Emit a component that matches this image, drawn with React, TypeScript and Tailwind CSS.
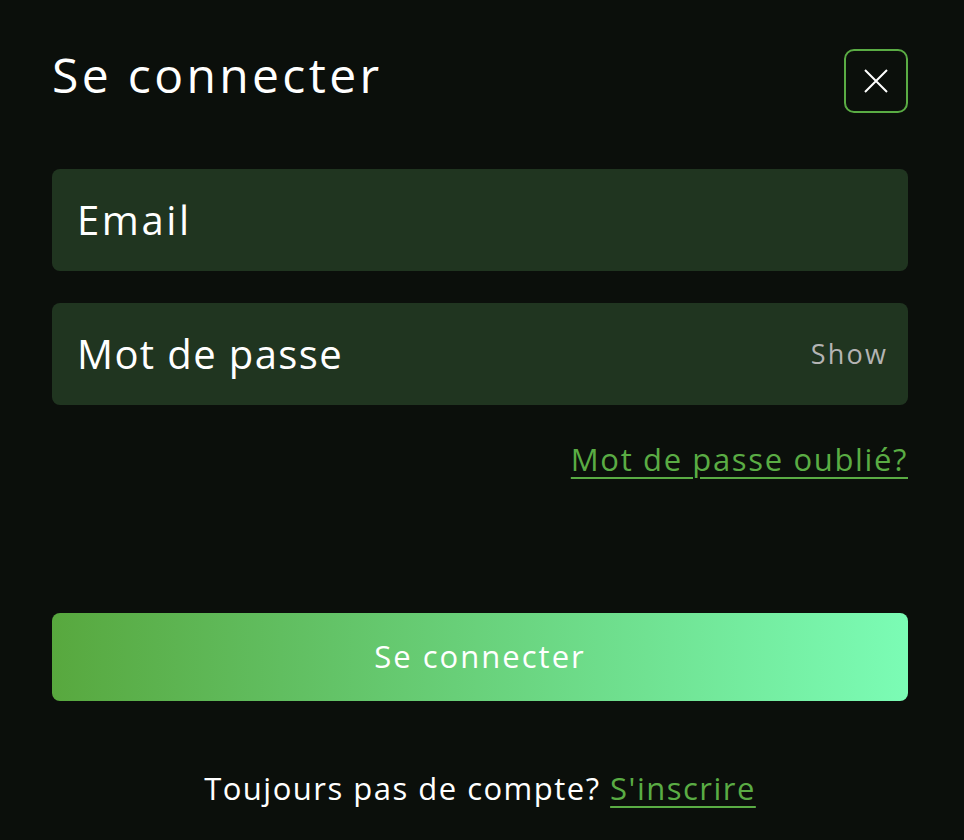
import React from "react";

export default function App() {
  return (
    <div
      className="w-[964px] h-[840px] bg-[#0b0f0b] text-white flex flex-col pl-[52px] pr-[56px] tracking-[0.06em]"
      style={{ fontFamily: '"Open Sans", "Noto Sans", sans-serif' }}
    >
      <div className="flex items-start justify-between pt-[49px]">
        <h1 className="text-[48px] leading-[58px] mt-[-3px] font-normal tracking-[0.07em]">Se connecter</h1>
        <button className="w-[64px] h-[64px] rounded-[10px] border-2 border-[#5aac44] flex items-center justify-center">
          <svg width="26" height="26" viewBox="0 0 26 26" fill="none" stroke="white" strokeWidth="2">
            <path d="M2 2 L24 24 M24 2 L2 24" />
          </svg>
        </button>
      </div>
      <div className="mt-[56px] h-[102px] rounded-[8px] bg-[#203520] flex items-center px-[25px]">
        <span className="text-[40px] tracking-[0.065em]">Email</span>
      </div>
      <div className="mt-[32px] h-[102px] rounded-[8px] bg-[#203520] flex items-center justify-between pl-[25px] pr-[20px]">
        <span className="text-[40px] tracking-[0.035em]">Mot de passe</span>
        <span className="text-[27px] text-[#b4b4b4] tracking-[0.08em]">Show</span>
      </div>
      <div className="flex justify-end mt-[31px]">
        <a className="text-[31px] tracking-[0.053em] text-[#5aac44] underline underline-offset-[6px] decoration-[2px]">Mot de passe oublié?</a>
      </div>
      <button className="mt-[130px] h-[88px] rounded-[8px] bg-gradient-to-r from-[#58a83e] to-[#7bfcb5] text-[31px] tracking-[0.065em] text-white">
        Se connecter
      </button>
      <div className="mt-[64px] text-center text-[31px] tracking-[0.048em]">
        Toujours pas de compte?{" "}
        <a className="text-[#5aac44] underline underline-offset-[6px] decoration-[2px]">S'inscrire</a>
      </div>
    </div>
  );
}
